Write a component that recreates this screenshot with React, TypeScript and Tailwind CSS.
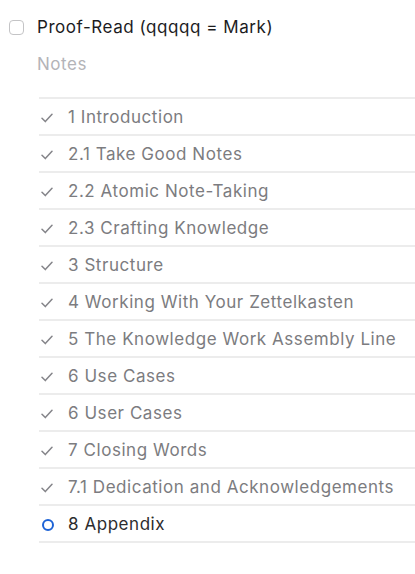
import React from "react";

const items = [
  "1 Introduction",
  "2.1 Take Good Notes",
  "2.2 Atomic Note-Taking",
  "2.3 Crafting Knowledge",
  "3 Structure",
  "4 Working With Your Zettelkasten",
  "5 The Knowledge Work Assembly Line",
  "6 Use Cases",
  "6 User Cases",
  "7 Closing Words",
  "7.1 Dedication and Acknowledgements",
];

function Check() {
  return (
    <svg width="12" height="10" viewBox="0 0 12 10" fill="none">
      <path d="M1 5.2 L4.3 8.6 L11 1.2" stroke="#85858a" strokeWidth="1.5" strokeLinecap="round" strokeLinejoin="round" />
    </svg>
  );
}

export default function App() {
  return (
    <div className="w-[415px] h-[574px] bg-white tracking-[0.55px]" style={{ fontFamily: "Inter, 'Noto Sans', sans-serif" }}>
      <div className="flex items-center pl-[9px] pt-[9px] h-[36px] box-content">
        <div className="w-[15px] h-[15px] rounded-[4px] border border-[#c4c4c6] bg-white shrink-0" />
        <span className="ml-[13px] text-[17px] text-[#1c1c1e] leading-none">Proof-Read (qqqqq = Mark)</span>
      </div>
      <div className="pl-[37px] mt-[6px] h-[26px] flex items-center text-[17px] text-[#b4b4b8] leading-none">Notes</div>
      <div className="ml-[39px] mt-[20px] border-b-2 border-[#ececec]">
        {items.map((t) => (
          <div key={t} className="h-[37px] border-t-2 border-[#ececec] flex items-center pt-[2px]">
            <div className="w-[29px] pl-[2px] flex items-center shrink-0">
              <Check />
            </div>
            <span className="text-[17px] text-[#7c7c80] leading-none whitespace-nowrap">{t}</span>
          </div>
        ))}
        <div className="h-[37px] border-t-2 border-[#ececec] flex items-center pt-[2px]">
          <div className="w-[29px] pl-[3px] flex items-center shrink-0">
            <div className="w-[12px] h-[12px] rounded-full border-2 border-[#1d63d6]" />
          </div>
          <span className="text-[17px] text-[#2c2c2e] leading-none">8 Appendix</span>
        </div>
      </div>
    </div>
  );
}
